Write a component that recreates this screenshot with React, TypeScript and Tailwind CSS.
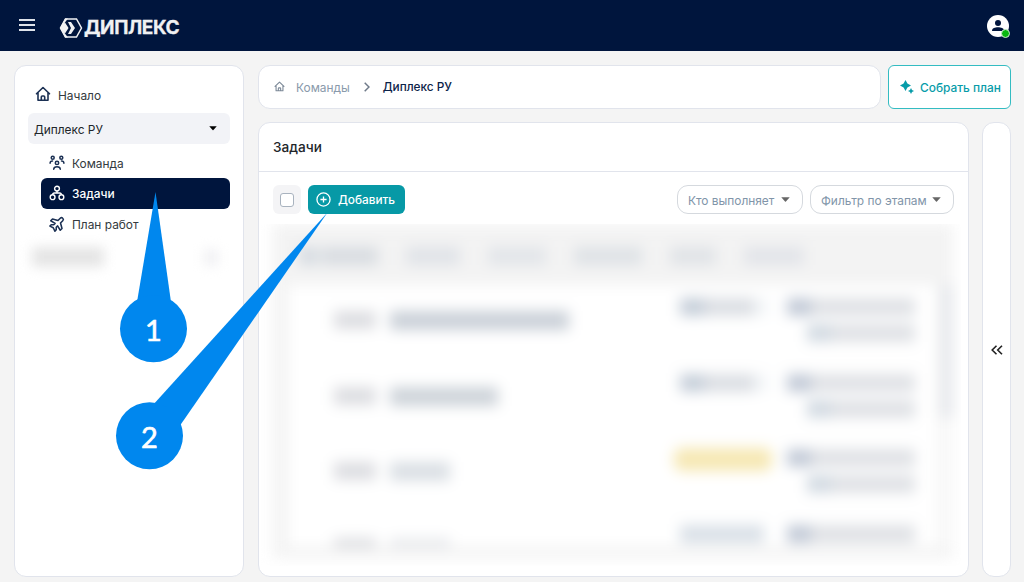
import type { ReactNode } from "react";

const HomeIcon = ({ className }: { className: string }) => (
  <svg viewBox="0 0 16 16" className={className} fill="none" stroke="currentColor" strokeWidth="1.6" strokeLinecap="round" strokeLinejoin="round">
    <path d="M1.500 7.800 8 1.500l6.500 6.300M3 6.800v7.400h10V6.800M6.300 14v-3a1 1 0 0 1 1-1h1.400a1 1 0 0 1 1 1v3" />
  </svg>
);

const TeamIcon = () => (
  <svg viewBox="0 0 16 16" className="size-4" fill="none" stroke="currentColor" strokeWidth="1.5" strokeLinecap="round">
    <circle cx="3.700" cy="2.700" r="1.500" />
    <circle cx="12.300" cy="2.700" r="1.500" />
    <circle cx="8" cy="7.900" r="1.700" />
    <path d="M1.100 8.300c0-1.500.8-2.200 2.400-2.200M14.900 8.300c0-1.500-.8-2.200-2.400-2.200M4.700 14.200c.1-1.700 1.200-2.500 3.300-2.500s3.200.8 3.300 2.500" />
  </svg>
);

const TasksIcon = () => (
  <svg viewBox="0 0 16 16" className="size-4" fill="none" stroke="currentColor" strokeWidth="1.4">
    <circle cx="8" cy="3.600" r="2.400" />
    <circle cx="3.600" cy="12.200" r="2.400" />
    <circle cx="12.400" cy="12.200" r="2.400" />
    <path d="M8 6v2M3.600 9.800c0-1.200.7-1.800 1.800-1.800h5.200c1.100 0 1.800.6 1.800 1.800" />
  </svg>
);

const PlaneIcon = () => (
  <svg viewBox="0 0 24 24" className="size-[17px] shrink-0 -rotate-45" fill="none" stroke="currentColor" strokeWidth="2.200" strokeLinejoin="round">
    <path d="M15.500 9.500h4.500a2.500 2.500 0 0 1 0 5h-4.500l-4 7H8l1.700-7H7l-2.500 2.500H1.800L3.500 12 1.800 7h2.700L7 9.500h2.700L8 2.500h3.500z" />
  </svg>
);

const Caret = ({ className }: { className: string }) => (
  <svg viewBox="0 0 10 5" className={className} fill="currentColor">
    <path d="M.3 0h9.400L5.500 4.700a.7.7 0 0 1-1 0z" />
  </svg>
);

const NavItem = ({ icon, label, active = false }: { icon: ReactNode; label: string; active?: boolean }) => (
  <div className={active ? "flex h-[30.5px] items-center gap-[7px] rounded-md bg-[#00153d] pl-2 text-white" : "flex h-[30.5px] items-center gap-[7px] pl-2 text-[#343a40]"}>
    <span className={active ? "flex w-4 justify-center text-white" : "flex w-4 justify-center text-[#1c3154]"}>{icon}</span>
    <span className={active ? "pt-[2px] font-medium" : "pt-[2px]"}>{label}</span>
  </div>
);

const Filter = ({ label, width }: { label: string; width: string }) => (
  <div className={`flex h-[29px] items-center justify-between rounded-[11px] border border-[#d5d9de] pr-3 pl-[10px] text-[11.9px] whitespace-nowrap text-[#8195a9] ${width}`}>
    <span className="pt-[2px]">{label}</span>
    <Caret className="h-[5px] w-[9px] shrink-0 text-[#666]" />
  </div>
);

const Assignee = ({ second = true }: { second?: boolean }) => (
  <div className="flex w-[128px] flex-col items-end gap-[8px]">
    <div className="flex h-[18px] w-[128px] bg-[#dfe1e5]">
      <div className="w-6 bg-[#c2cad7]" />
    </div>
    {second && (
      <div className="flex h-[18px] w-[108px] bg-[#dfe1e5]">
        <div className="w-6 bg-[#d2dae2]" />
      </div>
    )}
  </div>
);

const Status = ({ kind }: { kind: string }) => {
  if (kind === "yellow") return <div className="-mt-px -ml-1.5 h-[23px] w-[98px] rounded-lg bg-[#f6e8b4]" />;
  if (kind === "blue") return <div className="h-[18px] w-[84px] bg-[#d9e0e7]" />;
  return (
    <div className="flex h-[18px] w-[88px]">
      <div className="w-6 bg-[#c5ced9]" />
      <div className="w-[50px] bg-[#dbdee3]" />
      <div className="w-3.5 bg-[#f2f5f8]" />
    </div>
  );
};

const rows = [
  { title: "w-[179px] bg-[#cad0d8]", status: "gray", second: true },
  { title: "w-[108px] bg-[#cdd3d9]", status: "gray", second: true },
  { title: "w-[60px] bg-[#dadfe4]", status: "yellow", second: true },
  { title: "w-[60px] bg-[#e8eaed]", status: "blue", second: false },
];

const BlurredTable = () => (
  <div className="ml-[2px] h-[342px] w-[700px] overflow-hidden pr-2 pl-3">
    <div className="h-[334px] bg-[#f3f3f3] pl-[15px] blur-[7px]">
      <div className="flex h-[61px] items-center gap-[28px] pt-[2px] pl-3">
        <div className="flex h-[18px] w-[78px] gap-1">
          <div className="w-4 bg-[#d2d8df]" />
          <div className="flex-1 bg-[#d8dce1]" />
        </div>
        <div className="h-[18px] w-[54px] bg-[#e0e3e8]" />
        <div className="h-[18px] w-[58px] bg-[#e2e5e9]" />
        <div className="h-[18px] w-[68px] bg-[#dee2e6]" />
        <div className="h-[18px] w-[46px] bg-[#e0e3e7]" />
        <div className="h-[18px] w-[60px] bg-[#e2e4e9]" />
      </div>
      <div className="flex">
        <div className="h-[262px] w-[648px] overflow-hidden bg-white">
          {rows.map((row, index) => (
            <div key={index} className="flex h-[75.5px] items-start border-b border-[#fafafa] pl-[46px]">
              <div className="mt-[26px] h-[18px] w-[42px] bg-[#dcdde1]" />
              <div className="mt-[26px] ml-[14px] w-[290px]">
                <div className={`h-[19px] ${row.title}`} />
              </div>
              <div className="mt-[13px] w-[107px]">
                <Status kind={row.status} />
              </div>
              <div className="mt-[13px]">
                <Assignee second={row.second} />
              </div>
            </div>
          ))}
        </div>
        <div className="h-[262px] flex-1 bg-[#f8f8f8]">
          <div className="ml-1 h-[133px] bg-[#e5e7eb]" />
        </div>
      </div>
    </div>
  </div>
);

const Callouts = () => (
  <svg className="pointer-events-none absolute top-0 left-0" width="1024" height="582" viewBox="0 0 1024 582">
    <g fill="#0087ee">
      <path d="M155.500 192 137 302h34z" />
      <circle cx="153.500" cy="328.700" r="33.500" />
      <path d="M327.500 212.500 152 406l27 21z" />
      <circle cx="149.500" cy="435.700" r="33.500" />
    </g>
    <g fill="white" stroke="white" strokeWidth="0.6" textAnchor="middle" className="font-['Lato',sans-serif] text-[29px]">
      <text x="153.500" y="340.500">1</text>
      <text x="149.500" y="447.500">2</text>
    </g>
  </svg>
);

export default function App() {
  return (
    <div className="relative flex h-[582px] w-[1024px] flex-col overflow-hidden bg-[#f4f4f4] font-['Inter',sans-serif] text-[11.9px] text-[#212529]">
      <header className="flex h-[51px] shrink-0 items-center bg-[#00153d] pr-[15px] pl-[19px] text-white">
        <div className="mb-px flex w-4 flex-col gap-[3px]">
          <div className="h-[2px] bg-[#dfe3ea]" />
          <div className="h-[2px] bg-[#dfe3ea]" />
          <div className="h-[2px] bg-[#dfe3ea]" />
        </div>
        <div className="mt-[4px] ml-[24px] flex items-center gap-[1px]">
          <svg viewBox="0 0 24 22" className="h-[22px] w-6" fill="none">
            <path d="M6.500 2h11l5 9-5 9h-11l-5-9z" stroke="#f0f1f3" strokeWidth="1.500" />
            <path d="M6 1.500h3L5.500 6 9 11l-3.500 5 3.500 4.500H6L1 11z" fill="#f0f1f3" />
            <path d="M9 5h3l4 6-4 6H9l3-6z" fill="#f0f1f3" />
            <path d="M2.500 11 6 5.500 9.500 11 6 16.500z" fill="#f0f1f3" />
          </svg>
          <span className="text-[19px] leading-none font-bold tracking-[-0.4px] text-[#f0f1f3] [-webkit-text-stroke:0.3px_#f0f1f3]">ДИПЛЕКС</span>
        </div>
        <div className="relative ml-auto flex size-[22px] items-center justify-center rounded-full bg-white">
          <svg viewBox="0 0 22 22" className="size-[22px]" fill="#00153d">
            <circle cx="11" cy="8" r="3" />
            <path d="M5 16c0-3 3-3.700 6-3.700s6 .7 6 3.700z" />
          </svg>
          <div className="absolute -right-px -bottom-px size-[9px] rounded-full border border-[#cdebd0] bg-[#08b80e]" />
        </div>
      </header>

      <div className="flex h-[526px] gap-[14px] pt-[14px] pr-[13px] pl-[14px]">
        <aside className="w-[230px] rounded-xl border border-[#e1e4ec] bg-white px-[13px] pt-[14px]">
          <div className="flex h-[31px] items-center gap-[7px] pl-[7px] text-[#343a40]">
            <HomeIcon className="-mt-[3px] size-4 text-[#1c3154]" />
            Начало
          </div>
          <div className="mt-[2px] flex h-[31px] items-center justify-between rounded-md bg-[#f2f3f7] pr-[13px] pl-[6px]">
            <span className="pt-[2px]">Диплекс РУ</span>
            <Caret className="h-[4.5px] w-2 text-black" />
          </div>
          <div className="mt-[3.5px] ml-[13px] flex flex-col">
            <NavItem icon={<TeamIcon />} label="Команда" />
            <NavItem icon={<TasksIcon />} label="Задачи" active />
            <NavItem icon={<PlaneIcon />} label="План работ" />
          </div>
          <div className="mt-[8px] flex items-center justify-between pr-3 pl-1 blur-[6px]">
            <div className="h-5 w-[72px] bg-[#e5e5e5]" />
            <div className="h-[17px] w-[14px] bg-[#f0f0f3]" />
          </div>
        </aside>

        <main className="flex min-w-0 flex-1 flex-col gap-[14px]">
          <div className="flex h-[43px] shrink-0 gap-[7px]">
            <nav className="flex h-[44px] flex-1 items-center rounded-xl border border-[#e1e4ec] bg-white pl-[15px]">
              <HomeIcon className="-mt-0.5 size-[11px] text-[#7c8998]" />
              <span className="ml-[11px] pt-[2px] text-[#8a9aab]">Команды</span>
              <svg viewBox="0 0 6 10" className="ml-[14px] h-[10px] w-[6px]" fill="none" stroke="#6f7a89" strokeWidth="1.500">
                <path d="m.7.7 4.300 4.300L.7 9.300" />
              </svg>
              <span className="ml-[13px] pt-[2px] text-[11.8px] font-medium text-[#0c2349]">Диплекс РУ</span>
            </nav>
            <button className="flex h-[44px] w-[123px] items-center gap-[6px] rounded-md border border-[#34bcc2] bg-white pl-[11px] font-medium whitespace-nowrap text-[#079ca9]">
              <svg viewBox="0 0 14 14" className="size-[14px] shrink-0" fill="currentColor">
                <path d="M5.500 0 7.400 3.600 11 5.500 7.400 7.400 5.500 11 3.600 7.400 0 5.500l3.600-1.900zM11 8l1 2 2 1-2 1-1 2-1-2-2-1 2-1z" />
              </svg>
              <span className="pt-[2px]">Собрать план</span>
            </button>
          </div>

          <div className="flex min-h-0 flex-1 gap-[13px]">
            <section className="w-[711px] overflow-hidden rounded-xl border border-[#e1e4ec] bg-white">
              <h1 className="flex h-[49px] items-center border-b border-[#e1e4ec] pl-[14px] text-[13.6px] font-medium">Задачи</h1>
              <div className="flex h-[52px] items-start pt-[13px] pr-[14px] pl-[14px]">
                <div className="flex h-[29px] w-[28px] items-center justify-center rounded-md bg-[#f4f4f6]">
                  <div className="size-[14px] rounded-[3px] border border-[#a9b3bf] bg-white" />
                </div>
                <button className="ml-[7px] flex h-[29px] w-[97px] items-center gap-[7px] rounded-md bg-[#0799a6] pl-2 text-[11.8px] font-medium text-white">
                  <svg viewBox="0 0 16 16" className="size-[15px]" fill="none" stroke="currentColor" strokeWidth="1.400">
                    <circle cx="8" cy="8" r="7" />
                    <path d="M8 4.700v6.600M4.700 8h6.600" />
                  </svg>
                  <span className="pt-[2px]">Добавить</span>
                </button>
                <div className="ml-auto flex gap-[7px]">
                  <Filter label="Кто выполняет" width="w-[126px]" />
                  <Filter label="Фильтр по этапам" width="w-[144px]" />
                </div>
              </div>
              <BlurredTable />
            </section>
            <div className="flex flex-1 items-center justify-center rounded-xl border border-[#e1e4ec] bg-white">
              <svg viewBox="0 0 12 10" className="h-[10px] w-3" fill="none" stroke="#222" strokeWidth="1.600">
                <path d="M5.500.7 1.200 5l4.300 4.300M11 .7 6.700 5 11 9.300" />
              </svg>
            </div>
          </div>
        </main>
      </div>
      <Callouts />
    </div>
  );
}
